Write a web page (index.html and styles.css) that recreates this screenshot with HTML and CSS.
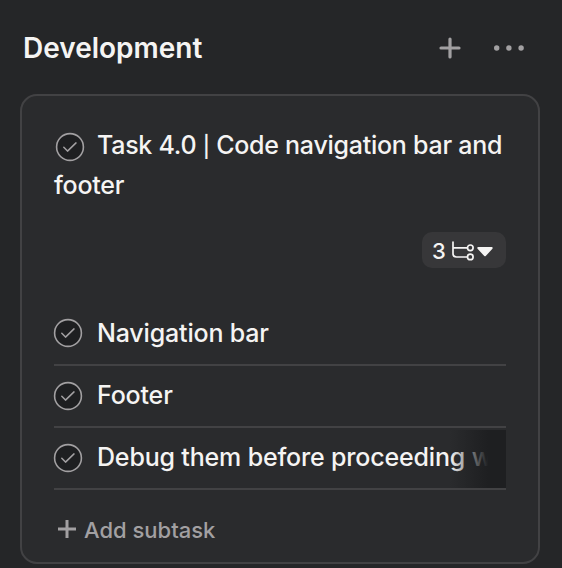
FILE: index.html
```html
<!DOCTYPE html>
<html lang="en">
<head>
<meta charset="utf-8">
<title>Development</title>
<link rel="stylesheet" href="styles.css">
</head>
<body>
<svg class="defs" aria-hidden="true">
  <symbol id="check" viewBox="0 0 30 30">
    <circle cx="15" cy="15" r="13.4" fill="#1e1f21" stroke="#a2a0a2" stroke-width="1.6"/>
    <path d="M8.8 15.3 L12.5 19.1 L21 10.9" fill="none" stroke="#a2a0a2" stroke-width="1.5" stroke-linecap="round" stroke-linejoin="round"/>
  </symbol>
</svg>
<header class="header">
  <h1 class="title">Development</h1>
  <svg class="plus" viewBox="0 0 22 22"><path d="M11 2V20M2 11H20" stroke="#a2a0a2" stroke-width="3.2" stroke-linecap="round"/></svg>
  <svg class="more" viewBox="0 0 32 8" fill="#a2a0a2"><circle cx="3.7" cy="4" r="2.7"/><circle cx="15.9" cy="4" r="2.7"/><circle cx="28.1" cy="4" r="2.7"/></svg>
</header>
<main class="card">
  <h2 class="task"><svg class="task-check"><use href="#check"/></svg><span>Task 4.0 <span class="bar">|</span> Code navigation bar and</span> <span class="task-end">footer</span></h2>
  <div class="meta">
    <button class="pill">
      <span class="count">3</span>
      <svg class="tree" viewBox="0 0 24 20" fill="none" stroke="#f5f4f3" stroke-width="1.7" stroke-linecap="round"><path d="M2 1V12.5Q2 16 5.5 16H16M2 6.8H16"/><circle cx="19.3" cy="6.8" r="2.8"/><circle cx="19.3" cy="15.9" r="2.8"/></svg>
      <svg class="caret" viewBox="0 0 18 12"><path d="M2.3 2H15.7L9 9.3Z" fill="#f5f4f3" stroke="#f5f4f3" stroke-width="2" stroke-linejoin="round"/></svg>
    </button>
  </div>
  <ul class="subtasks">
    <li class="row"><svg class="row-check"><use href="#check"/></svg><span>Navigation bar</span></li>
    <li class="row"><svg class="row-check"><use href="#check"/></svg><span>Footer</span></li>
    <li class="row fading"><svg class="row-check"><use href="#check"/></svg><span>Debug them before proceeding w</span></li>
  </ul>
  <button class="add">
    <svg class="add-plus" viewBox="0 0 20 20"><path d="M10 1V19M1 10H19" stroke="#a2a0a2" stroke-width="3"/></svg>
    <span>Add subtask</span>
  </button>
</main>
</body>
</html>
```
FILE: styles.css
```css
* { box-sizing: border-box; }
body {
  margin: 0;
  height: 568px;
  overflow: hidden;
  background: #252628;
  color: #f5f4f3;
  font-family: Inter, "Liberation Sans", sans-serif;
}
.defs { display: none; }
svg { flex: none; }
.header {
  display: flex;
  align-items: center;
  height: 94px;
  padding: 1px 37px 0 23px;
}
.title {
  flex: 1;
  margin: 0;
  font-size: 28px;
  font-weight: 560;
}
.plus { width: 22px; height: 22px; margin-right: 32px; }
.more { width: 32px; height: 8px; }
.card {
  width: 520px;
  height: 470px;
  margin-left: 20px;
  padding: 29px 32px 0;
  border: 2px solid #424244;
  border-radius: 17px;
  background: #2a2b2d;
}
.task {
  height: 80px;
  margin: 0;
  font-size: 25px;
  font-weight: 450;
  line-height: 40px;
  letter-spacing: -0.26px;
  white-space: nowrap;
}
.task-check {
  width: 30px;
  height: 30px;
  margin: 0 12px 0 1px;
  vertical-align: -8px;
}
.bar { font-size: 21px; line-height: 1; }
.task-end { display: block; }
.meta { display: flex; justify-content: flex-end; margin-top: 27px; }
.pill {
  display: flex;
  align-items: center;
  width: 84px;
  height: 36px;
  padding: 1px 0 0 10px;
  border: 0;
  border-radius: 10px;
  background: #373739;
  color: inherit;
  font: 450 22px Inter, sans-serif;
}
.count { width: 19px; text-align: left; }
.tree { width: 24px; height: 20px; }
.caret { width: 18px; height: 12px; margin: 2px 0 0 1px; }
.subtasks { margin: 36px 0 0; padding: 0; list-style: none; }
.row {
  position: relative;
  display: flex;
  align-items: center;
  height: 62px;
  padding-bottom: 2px;
  border-bottom: 2px solid #424244;
  font-size: 25px;
  font-weight: 450;
  letter-spacing: -0.17px;
  white-space: nowrap;
}
.row-check { width: 30px; height: 30px; margin: 1px 14px 0 -1px; }
.row:first-child .row-check { margin-top: -1px; }
.fading::after {
  content: "";
  position: absolute;
  top: 2px;
  right: 0;
  bottom: 0;
  width: 56px;
  background: linear-gradient(90deg, rgba(30, 31, 33, 0), #1e1f21 68%);
}
.add {
  display: flex;
  align-items: center;
  gap: 7px;
  height: 40px;
  margin-top: 20px;
  padding: 0 0 0 3px;
  border: 0;
  background: none;
  color: #a2a0a2;
  font: 500 22px Inter, sans-serif;
}
.add-plus { width: 20px; height: 20px; margin-top: -2px; }
```
